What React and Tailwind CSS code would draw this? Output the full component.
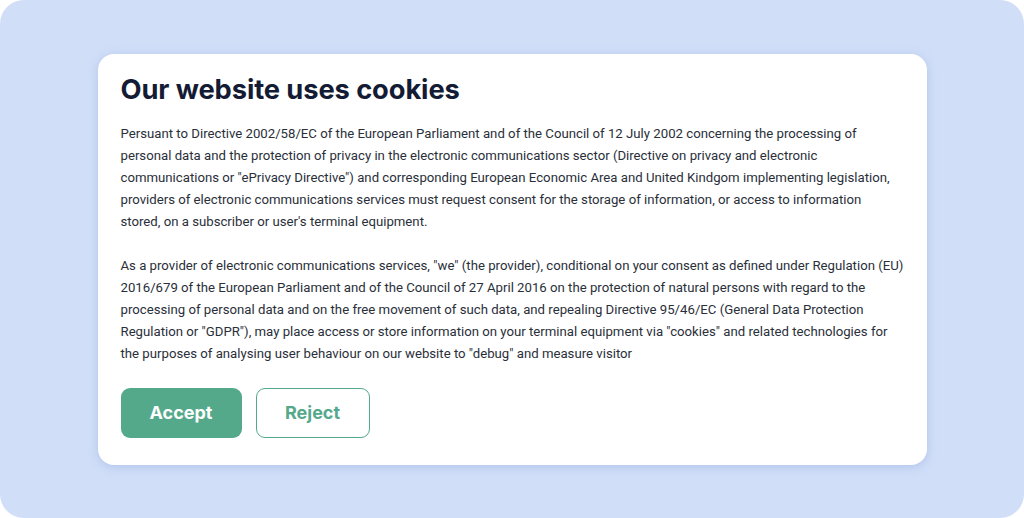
export default function App() {
  return (
    <div className="w-[1024px] h-[518px] bg-white">
      <div className="w-full h-full rounded-[24px] bg-[#d0def8] flex items-center justify-center">
        <div className="w-[829px] h-[411px] bg-white rounded-[16px] shadow-[0_2px_10px_rgba(120,150,210,0.35)] pl-[23px] pr-[12px] pt-[16px]">
          <h1 className="text-[27.3px] leading-[40px] font-bold text-[#141b34] tracking-[-0.1px]" style={{ fontFamily: "Inter, 'Noto Sans', sans-serif" }}>
            Our website uses cookies
          </h1>
          <div className="mt-[13px] text-[13.2px] leading-[22px] text-[#2a2f3a]" style={{ fontFamily: "Roboto, 'Liberation Sans', sans-serif" }}>
            <p>
              Persuant to Directive 2002/58/EC of the European Parliament and of the Council of 12 July 2002 concerning the processing of<br />
              personal data and the protection of privacy in the electronic communications sector (Directive on privacy and electronic<br />
              communications or "ePrivacy Directive") and corresponding European Economic Area and United Kindgom implementing legislation,<br />
              providers of electronic communications services must request consent for the storage of information, or access to information<br />
              stored, on a subscriber or user's terminal equipment.
            </p>
            <p className="mt-[22px]">
              As a provider of electronic communications services, "we" (the provider), conditional on your consent as defined under Regulation (EU)<br />
              2016/679 of the European Parliament and of the Council of 27 April 2016 on the protection of natural persons with regard to the<br />
              processing of personal data and on the free movement of such data, and repealing Directive 95/46/EC (General Data Protection<br />
              Regulation or "GDPR"), may place access or store information on your terminal equipment via "cookies" and related technologies for<br />
              the purposes of analysing user behaviour on our website to "debug" and measure visitor
            </p>
          </div>
          <div className="mt-[23px] flex gap-[14px]" style={{ fontFamily: "Inter, 'Noto Sans', sans-serif" }}>
            <button className="w-[121px] h-[50px] rounded-[9px] bg-[#55a98b] text-white text-[18px] font-bold">
              Accept
            </button>
            <button className="w-[114px] h-[50px] rounded-[9px] border-[1.5px] border-[#55a98b] text-[#55a98b] text-[18px] font-bold bg-white">
              Reject
            </button>
          </div>
        </div>
      </div>
    </div>
  );
}
